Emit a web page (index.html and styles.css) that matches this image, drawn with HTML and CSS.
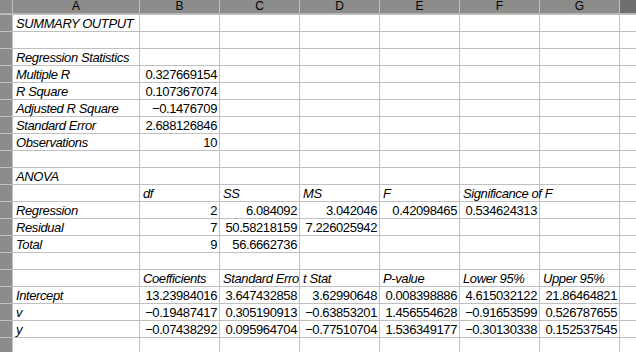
FILE: index.html
```html
<!DOCTYPE html>
<html>
<head>
<meta charset="utf-8">
<link rel="stylesheet" href="styles.css">
</head>
<body>
<div class="sheet">
  <div class="row head">
    <div class="h corner"></div><div class="h">A</div><div class="h">B</div><div class="h">C</div><div class="h">D</div><div class="h">E</div><div class="h">F</div><div class="h">G</div><div class="h dark"></div>
  </div>
  <div class="row"><div class="rh"></div><div class="c l">SUMMARY OUTPUT</div><div class="c"></div><div class="c"></div><div class="c"></div><div class="c"></div><div class="c"></div><div class="c"></div><div class="c"></div></div>
  <div class="row"><div class="rh"></div><div class="c"></div><div class="c"></div><div class="c"></div><div class="c"></div><div class="c"></div><div class="c"></div><div class="c"></div><div class="c"></div></div>
  <div class="row"><div class="rh"></div><div class="c l">Regression Statistics</div><div class="c"></div><div class="c"></div><div class="c"></div><div class="c"></div><div class="c"></div><div class="c"></div><div class="c"></div></div>
  <div class="row"><div class="rh"></div><div class="c l">Multiple R</div><div class="c n">0.327669154</div><div class="c"></div><div class="c"></div><div class="c"></div><div class="c"></div><div class="c"></div><div class="c"></div></div>
  <div class="row"><div class="rh"></div><div class="c l">R Square</div><div class="c n">0.107367074</div><div class="c"></div><div class="c"></div><div class="c"></div><div class="c"></div><div class="c"></div><div class="c"></div></div>
  <div class="row"><div class="rh"></div><div class="c l">Adjusted R Square</div><div class="c n">−0.1476709</div><div class="c"></div><div class="c"></div><div class="c"></div><div class="c"></div><div class="c"></div><div class="c"></div></div>
  <div class="row"><div class="rh"></div><div class="c l">Standard Error</div><div class="c n">2.688126846</div><div class="c"></div><div class="c"></div><div class="c"></div><div class="c"></div><div class="c"></div><div class="c"></div></div>
  <div class="row"><div class="rh"></div><div class="c l">Observations</div><div class="c n">10</div><div class="c"></div><div class="c"></div><div class="c"></div><div class="c"></div><div class="c"></div><div class="c"></div></div>
  <div class="row"><div class="rh"></div><div class="c"></div><div class="c"></div><div class="c"></div><div class="c"></div><div class="c"></div><div class="c"></div><div class="c"></div><div class="c"></div></div>
  <div class="row"><div class="rh"></div><div class="c l">ANOVA</div><div class="c"></div><div class="c"></div><div class="c"></div><div class="c"></div><div class="c"></div><div class="c"></div><div class="c"></div></div>
  <div class="row"><div class="rh"></div><div class="c"></div><div class="c l">df</div><div class="c l">SS</div><div class="c l">MS</div><div class="c l">F</div><div class="c l over">Significance of F</div><div class="c"></div><div class="c"></div></div>
  <div class="row"><div class="rh"></div><div class="c l">Regression</div><div class="c n">2</div><div class="c n">6.084092</div><div class="c n">3.042046</div><div class="c n">0.42098465</div><div class="c n">0.534624313</div><div class="c"></div><div class="c"></div></div>
  <div class="row"><div class="rh"></div><div class="c l">Residual</div><div class="c n">7</div><div class="c n">50.58218159</div><div class="c n">7.226025942</div><div class="c"></div><div class="c"></div><div class="c"></div><div class="c"></div></div>
  <div class="row"><div class="rh"></div><div class="c l">Total</div><div class="c n">9</div><div class="c n">56.6662736</div><div class="c"></div><div class="c"></div><div class="c"></div><div class="c"></div><div class="c"></div></div>
  <div class="row"><div class="rh"></div><div class="c"></div><div class="c"></div><div class="c"></div><div class="c"></div><div class="c"></div><div class="c"></div><div class="c"></div><div class="c"></div></div>
  <div class="row"><div class="rh"></div><div class="c"></div><div class="c l">Coefficients</div><div class="c l clip">Standard Error</div><div class="c l">t Stat</div><div class="c l">P-value</div><div class="c l">Lower 95%</div><div class="c l">Upper 95%</div><div class="c"></div></div>
  <div class="row"><div class="rh"></div><div class="c l">Intercept</div><div class="c n">13.23984016</div><div class="c n">3.647432858</div><div class="c n">3.62990648</div><div class="c n">0.008398886</div><div class="c n">4.615032122</div><div class="c n">21.86464821</div><div class="c"></div></div>
  <div class="row"><div class="rh"></div><div class="c l">v</div><div class="c n">−0.19487417</div><div class="c n">0.305190913</div><div class="c n">−0.63853201</div><div class="c n">1.456554628</div><div class="c n">−0.91653599</div><div class="c n">0.526787655</div><div class="c"></div></div>
  <div class="row"><div class="rh"></div><div class="c l">y</div><div class="c n">−0.07438292</div><div class="c n">0.095964704</div><div class="c n">−0.77510704</div><div class="c n">1.536349177</div><div class="c n">−0.30130338</div><div class="c n">0.152537545</div><div class="c"></div></div>
  <div class="row"><div class="rh"></div><div class="c"></div><div class="c"></div><div class="c"></div><div class="c"></div><div class="c"></div><div class="c"></div><div class="c"></div><div class="c"></div></div>
</div>
</body>
</html>
```

FILE: styles.css
```css
html, body {
  margin: 0;
  padding: 0;
  background: #ffffff;
}
body {
  width: 636px;
  height: 352px;
  overflow: hidden;
  font-family: "Liberation Sans", Arial, sans-serif;
  font-size: 13px;
  letter-spacing: -0.4px;
  color: #000000;
}
.sheet {
  display: flex;
  flex-direction: column;
  gap: 1px;
  background: #c0c0c0;
}
.row {
  display: grid;
  grid-template-columns: 12px 126px repeat(6, 79px) 1fr;
  column-gap: 1px;
  height: 16px;
}
.row.head {
  height: 14px;
}
.h {
  background: #8c8c8a;
  text-align: center;
  font-size: 12px;
  letter-spacing: 0;
  line-height: 13px;
  height: 14px;
  border-bottom: 1px solid #b4b4b4;
  box-sizing: border-box;
}
.h.dark {
  background: #6e6e6e;
}
.rh {
  background: #8c8c8a;
}
.c {
  background: #ffffff;
  white-space: nowrap;
  padding: 2px 2px 0 3px;
  line-height: 14px;
  box-sizing: border-box;
  overflow: visible;
}
.l {
  font-style: italic;
  text-align: left;
}
.n {
  text-align: right;
}
.over {
  z-index: 1;
}
.clip {
  overflow: hidden;
}
```
